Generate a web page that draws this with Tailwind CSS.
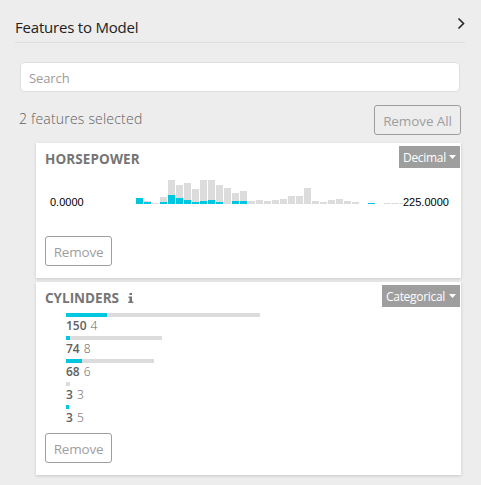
<!DOCTYPE html>
<html lang="en">
<head>
<meta charset="utf-8">
<title>Features to Model</title>
<script src="https://cdn.jsdelivr.net/npm/@tailwindcss/browser@4"></script>
</head>
<body class="h-[485px] w-[481px] overflow-hidden bg-[#ededed] font-['Open_Sans','Noto_Sans',sans-serif] text-[14px] text-[#757575]">
<header class="ml-[15px] flex h-[43px] w-[450px] justify-between border-b border-[#dedede] pt-[15px]">
  <h1 class="h-6 text-[15px] leading-6 font-medium tracking-[-0.2px] whitespace-nowrap text-[#212121]">Features to Model</h1>
  <svg class="mt-[2px] h-3.5 w-2.5" viewBox="0 0 10 14" fill="none" stroke="#262626" stroke-width="1.6"><path d="M3.5 1.5 8.5 6.5 3.5 11.5"/></svg>
</header>
<main class="w-[461px]">
  <input class="mt-[19px] ml-5 block h-[30px] w-[440px] rounded-[4px] border border-[#dedede] bg-white px-2 pt-px text-[13px] tracking-[-0.1px] placeholder:text-[#9b9b9b]" placeholder="Search">
  <div class="mt-[13px] ml-[19px] flex h-[30px] justify-between">
    <p class="pt-[2px] text-[14px] leading-6 font-light tracking-[0.2px] whitespace-nowrap text-[#616161]">2 features selected</p>
    <button class="h-[30px] w-[87px] rounded-[3px] border border-[#9e9e9e] pt-px text-[13.5px] leading-5 tracking-[-0.1px] whitespace-nowrap text-[#9e9e9e]">Remove All</button>
  </div>
  <section class="mt-2 ml-9 h-[135px] w-[425px] bg-white shadow-[0_1px_3px_rgba(0,0,0,0.16)]">
    <div class="flex justify-between pt-[3px] pr-px pl-[9px]">
      <h2 class="pt-[3px] text-[13.5px] leading-5 font-bold tracking-[0.1px] whitespace-nowrap">HORSEPOWER</h2>
      <button class="flex h-[22px] w-[61px] items-center gap-[4px] bg-[#9e9e9e] pt-px pl-[4px] text-[12px] leading-4 tracking-[-0.3px] text-white"><span class="w-[42px] text-left whitespace-nowrap">Decimal</span><svg class="mb-px h-1 w-[7px]" viewBox="0 0 7 4"><path d="M0 0h7L3.5 4z" fill="#fff"/></svg></button>
    </div>
    <div class="mt-[7px] flex h-[32px] pl-[14px] font-['Liberation_Sans',sans-serif] text-[11px] leading-4 text-black">
      <span class="w-[86px] pt-[18px]">0.0000</span>
      <svg class="mt-[4px] h-[24px] w-[267px] shrink-0" viewBox="0 0 267 24" shape-rendering="crispEdges">
        <path fill="#dcdcdc" d="M8 21h7v3h-7zM16 23h7v1h-7zM24 17h7v7h-7zM32 0h7v24h-7zM40 5h7v19h-7zM48 3h7v21h-7zM56 9h7v15h-7zM64 0h7v24h-7zM72 0h7v24h-7zM80 5h7v19h-7zM88 8h7v16h-7zM96 13h7v11h-7zM104 11h7v13h-7zM112 21h7v3h-7zM120 20h7v4h-7zM128 21h7v3h-7zM136 20h7v4h-7zM144 19h7v5h-7zM152 16h7v8h-7zM160 16h7v8h-7zM168 8h7v16h-7zM176 21h7v3h-7zM184 22h7v2h-7zM192 20h7v4h-7zM200 19h7v5h-7zM208 21h7v3h-7zM216 22h7v2h-7zM248 23h7v1h-7zM256 23h7v1h-7zM264 23h3v1h-3z"/>
        <path fill="#00c6e0" d="M0 18h7v6h-7zM8 22h7v2h-7zM24 22h7v2h-7zM32 15h7v9h-7zM40 18h7v6h-7zM48 20h7v4h-7zM56 22h7v2h-7zM64 21h7v3h-7zM72 20h7v4h-7zM80 22h7v2h-7zM96 21h7v3h-7zM104 21h7v3h-7zM232 23h7v1h-7z"/>
      </svg>
      <span class="pt-[18px]">225.0000</span>
    </div>
    <button class="mt-[28px] ml-[9px] block h-[30px] w-[67px] rounded-[3px] border border-[#9e9e9e] pt-px text-[13.5px] leading-5 tracking-[-0.2px] text-[#9e9e9e]">Remove</button>
  </section>
  <section class="mt-1 ml-9 h-[193px] w-[425px] bg-white shadow-[0_1px_3px_rgba(0,0,0,0.16)]">
    <div class="flex justify-between pt-[3px] pr-px pl-[9px]">
      <div class="flex pt-[3px]"><h2 class="w-[83px] text-[13.5px] leading-5 font-bold whitespace-nowrap">CYLINDERS</h2>
      <svg class="mt-[5px] h-[10px] w-[6px]" viewBox="0 0 6 10" fill="#757575"><path d="M1.5 0h2.5v2h-2.5zM.5 3.5h3.5v5h1.3v1.5h-5v-1.5h1.2v-3.5h-1z"/></svg></div>
      <button class="flex h-[22px] w-[78px] items-center gap-[3px] bg-[#9e9e9e] pt-px pl-1 text-[12px] leading-4 tracking-[-0.3px] text-white"><span class="w-[60px] text-left whitespace-nowrap">Categorical</span><svg class="mb-px h-1 w-[7px]" viewBox="0 0 7 4"><path d="M0 0h7L3.5 4z" fill="#fff"/></svg></button>
    </div>
    <ul class="mt-[5px] pl-[30px] text-[12px] leading-[17px] font-light text-[#616161]">
      <li class="h-[23px]"><div class="h-1 w-[194px] bg-[#dcdcdc]"><div class="h-1 w-[41px] bg-[#00c6e0]"></div></div><b class="mr-1 font-semibold">150</b>4</li>
      <li class="h-[23px]"><div class="h-1 w-[96px] bg-[#dcdcdc]"><div class="h-1 w-[4px] bg-[#00c6e0]"></div></div><b class="mr-1 font-semibold">74</b>8</li>
      <li class="h-[23px]"><div class="h-1 w-[88px] bg-[#dcdcdc]"><div class="h-1 w-[16px] bg-[#00c6e0]"></div></div><b class="mr-1 font-semibold">68</b>6</li>
      <li class="h-[23px]"><div class="h-1 w-[4px] bg-[#dcdcdc]"></div><b class="mr-1 font-semibold">3</b>3</li>
      <li class="h-[23px]"><div class="h-1 w-[4px] bg-[#dcdcdc]"><div class="h-1 w-[3px] bg-[#00c6e0]"></div></div><b class="mr-1 font-semibold">3</b>5</li>
    </ul>
    <button class="mt-[5px] ml-[9px] block h-[30px] w-[67px] rounded-[3px] border border-[#9e9e9e] pt-px text-[13.5px] leading-5 tracking-[-0.2px] text-[#9e9e9e]">Remove</button>
  </section>
</main>
</body>
</html>
